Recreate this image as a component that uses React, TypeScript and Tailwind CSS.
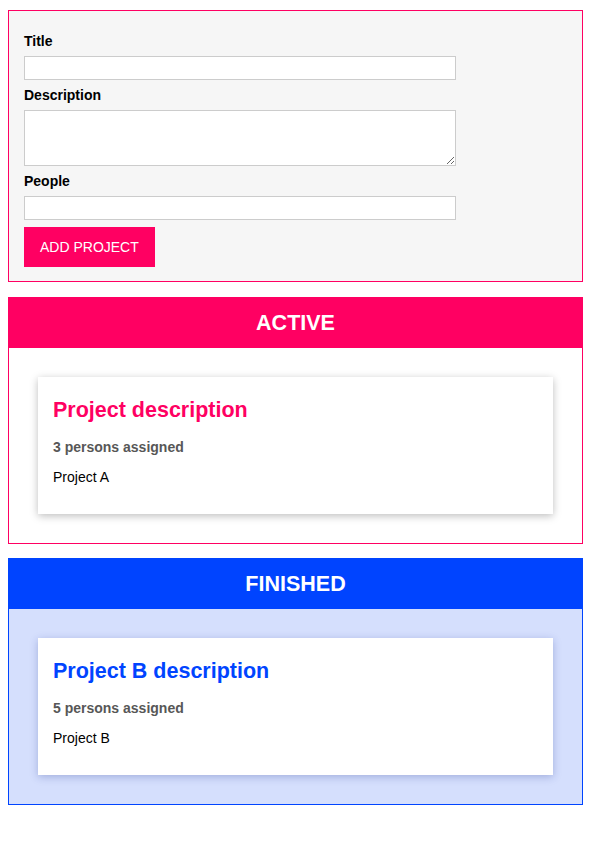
import { useState } from "react";

type Project = {
  title: string;
  description: string;
  people: number;
};

const active: Project[] = [{ title: "Project A", description: "Project description", people: 3 }];
const finished: Project[] = [{ title: "Project B", description: "Project B description", people: 5 }];

function ProjectItem({ project, finished }: { project: Project; finished?: boolean }) {
  return (
    <li
      className={`bg-white px-[15px] pt-[21px] pb-[29px] ${
        finished ? "shadow-[0_2px_8px_rgba(30,50,140,0.28)]" : "shadow-[0_2px_8px_rgba(0,0,0,0.26)]"
      }`}
    >
      <h2
        className={`text-[21.5px] leading-[25px] font-bold ${finished ? "text-[#0044ff]" : "text-[#ff0062]"}`}
      >
        {project.description}
      </h2>
      <h3 className="mt-[16px] text-[14px] leading-4 font-bold text-[#575757]">
        {project.people} persons assigned
      </h3>
      <p className="mt-[14px] text-[14px] leading-4 text-black">{project.title}</p>
    </li>
  );
}

function ProjectList({ type, projects }: { type: "active" | "finished"; projects: Project[] }) {
  const isFinished = type === "finished";
  return (
    <section
      className={`border ${isFinished ? "border-[#0044ff] bg-[#d5dffd]" : "border-[#ff0062] bg-white"}`}
    >
      <header
        className={`h-[50px] flex items-center justify-center ${isFinished ? "bg-[#0044ff]" : "bg-[#ff0062]"}`}
      >
        <h2 className="text-[21.5px] font-bold text-white uppercase">{type}</h2>
      </header>
      <ul className="px-[29px] py-[29px]">
        {projects.map((p, i) => (
          <ProjectItem key={i} project={p} finished={isFinished} />
        ))}
      </ul>
    </section>
  );
}

export default function App() {
  const [title, setTitle] = useState("");
  const [description, setDescription] = useState("");
  const [people, setPeople] = useState("");

  return (
    <div className="min-h-screen bg-white font-['Liberation_Sans',Arial,sans-serif] pt-[10px] pb-[40px]">
      <div className="ml-[8px] w-[575px]">
        <form
          className="border border-[#ff0062] bg-[#f6f6f6] pt-[22px] px-[15px] pb-[14px] flex flex-col items-start"
          onSubmit={(e) => e.preventDefault()}
        >
          <label className="text-[14px] leading-4 font-bold text-black">Title</label>
          <input
            type="text"
            value={title}
            onChange={(e) => setTitle(e.target.value)}
            className="mt-[7px] w-[432px] h-[24px] border border-[#ccc] bg-white outline-none px-1 text-[14px]"
          />
          <label className="mt-[7px] text-[14px] leading-4 font-bold text-black">Description</label>
          <textarea
            value={description}
            onChange={(e) => setDescription(e.target.value)}
            className="mt-[7px] w-[432px] h-[56px] border border-[#ccc] bg-white outline-none px-1 text-[14px] block"
          />
          <label className="mt-[7px] text-[14px] leading-4 font-bold text-black">People</label>
          <input
            type="number"
            value={people}
            onChange={(e) => setPeople(e.target.value)}
            className="mt-[7px] w-[432px] h-[24px] border border-[#ccc] bg-white outline-none px-1 text-[14px]"
          />
          <button
            type="submit"
            className="mt-[7px] bg-[#ff0062] text-white text-[14px] leading-4 px-4 py-3 uppercase"
          >
            Add Project
          </button>
        </form>

        <div className="mt-[15px]">
          <ProjectList type="active" projects={active} />
        </div>
        <div className="mt-[14px]">
          <ProjectList type="finished" projects={finished} />
        </div>
      </div>
    </div>
  );
}
